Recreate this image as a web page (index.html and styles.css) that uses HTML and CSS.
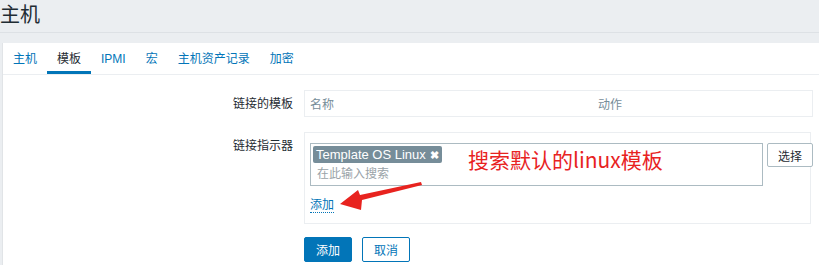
FILE: index.html
```html
<!DOCTYPE html>
<html lang="zh-CN">
<head>
    <meta charset="UTF-8">
    <link rel="stylesheet" href="styles.css">
    <title>主机</title>
</head>
<body>
    <div class="header">
        <h1>主机</h1>
    </div>

    <div class="panel">
        <ul class="tabs">
            <li><a href="#">主机</a></li>
            <li class="active"><a href="#">模板</a></li>
            <li><a href="#">IPMI</a></li>
            <li><a href="#">宏</a></li>
            <li><a href="#">主机资产记录</a></li>
            <li><a href="#">加密</a></li>
        </ul>

        <div class="form">
            <div class="row">
                <label class="label">链接的模板</label>
                <div class="box linked">
                    <span class="col-name">名称</span>
                    <span class="col-action">动作</span>
                </div>
            </div>

            <div class="row">
                <label class="label">链接指示器</label>
                <div class="box link-new">
                    <div class="select-line">
                        <div class="multiselect">
                            <span class="tag">Template OS Linux <b>&#10006;</b></span>
                            <div class="placeholder">在此输入搜索</div>
                        </div>
                        <button class="btn-select">选择</button>
                    </div>
                    <a class="add-link" href="#">添加</a>
                </div>
            </div>

            <div class="row">
                <span class="label"></span>
                <div class="actions">
                    <button class="btn primary">添加</button>
                    <button class="btn">取消</button>
                </div>
            </div>
        </div>

        <!-- annotation drawn over the screenshot -->
        <div class="note">搜索默认的linux模板</div>
        <svg class="arrow" width="90" height="34" viewBox="0 0 90 34">
            <path d="M4 25 L22 11 L24 16 L85 3 L86 6 L26 21 L25 31 Z" fill="#e8231f"/>
        </svg>
    </div>
</body>
</html>
```

FILE: styles.css
```css
body {
    margin: 0;
    background-color: #ebeef1;
    font-family: "Liberation Sans", Arial, "Noto Sans CJK SC", sans-serif;
    font-size: 12px;
    color: #1f2c33;
}

.header {
    height: 32px;
    border-bottom: 1px solid #dde1e5;
    margin-bottom: 10px;
}

.header h1 {
    margin: 0;
    font-size: 20px;
    font-weight: normal;
    line-height: 28px;
    font-family: "Noto Sans CJK SC", sans-serif;
    color: #1f2c33;
}

.panel {
    position: relative;
    margin-left: 2px;
    background-color: #fff;
    border-left: 1px solid #e1e4e7;
    height: 222px;
}

.tabs {
    list-style: none;
    margin: 0;
    padding: 0;
    display: flex;
    height: 31px;
    border-bottom: 1px solid #ebeef1;
}

.tabs li {
    padding: 0 10px;
    height: 28px;
    line-height: 28px;
}

.tabs li a {
    color: #0275b8;
    text-decoration: none;
    display: block;
    padding-top: 2px;
}

.tabs li.active {
    border-bottom: 3px solid #0275b8;
}

.tabs li.active a {
    color: #1f2c33;
}

.form {
    padding-top: 15px;
}

.row {
    display: flex;
    margin-bottom: 15px;
}

.label {
    width: 290px;
    flex: none;
    text-align: right;
    padding-right: 11px;
    line-height: 14px;
    padding-top: 7px;
}

.box {
    width: 507px;
    border: 1px solid #ebeef1;
}

.linked {
    height: 25px;
    display: flex;
    align-items: center;
    color: #768d99;
}

.col-name {
    width: 288px;
    padding-left: 5px;
}

.link-new {
    height: 92px;
    padding: 10px 0 0 5px;
    box-sizing: border-box;
}

.select-line {
    display: flex;
    align-items: flex-start;
}

.multiselect {
    width: 453px;
    height: 43px;
    border: 1px solid #acbbc2;
    padding: 2px 0 0 2px;
    box-sizing: border-box;
    flex: none;
}

.tag {
    display: inline-block;
    background-color: #768d99;
    color: #fff;
    font-size: 13px;
    height: 17px;
    line-height: 17px;
    padding: 0 3px 0 3px;
    border-radius: 2px;
}

.tag b {
    font-size: 11px;
    margin-left: 1px;
}

.placeholder {
    color: #9aa3a8;
    padding: 1px 0 0 4px;
}

.btn-select {
    margin-left: 4px;
    width: 46px;
    height: 24px;
    flex: none;
    background-color: #fff;
    border: 1px solid #acbbc2;
    border-radius: 2px;
    font-family: inherit;
    font-size: 12px;
    color: #1f2c33;
    padding: 0;
}

.add-link {
    display: inline-block;
    margin-top: 12px;
    color: #0275b8;
    text-decoration: none;
    border-bottom: 1px dotted #0275b8;
    line-height: 14px;
}

.actions {
    display: flex;
    gap: 10px;
    margin-top: -2px;
}

.btn {
    width: 48px;
    height: 25px;
    border: 1px solid #0275b8;
    background-color: #fff;
    color: #0275b8;
    border-radius: 2px;
    font-family: inherit;
    font-size: 12px;
    padding: 0;
}

.btn.primary {
    background-color: #0275b8;
    color: #fff;
}

.note {
    position: absolute;
    left: 465px;
    top: 103px;
    font-family: "Noto Sans CJK SC", sans-serif;
    font-size: 21px;
    color: #e8231f;
    line-height: 26px;
}

.arrow {
    position: absolute;
    left: 333px;
    top: 136px;
}
```
